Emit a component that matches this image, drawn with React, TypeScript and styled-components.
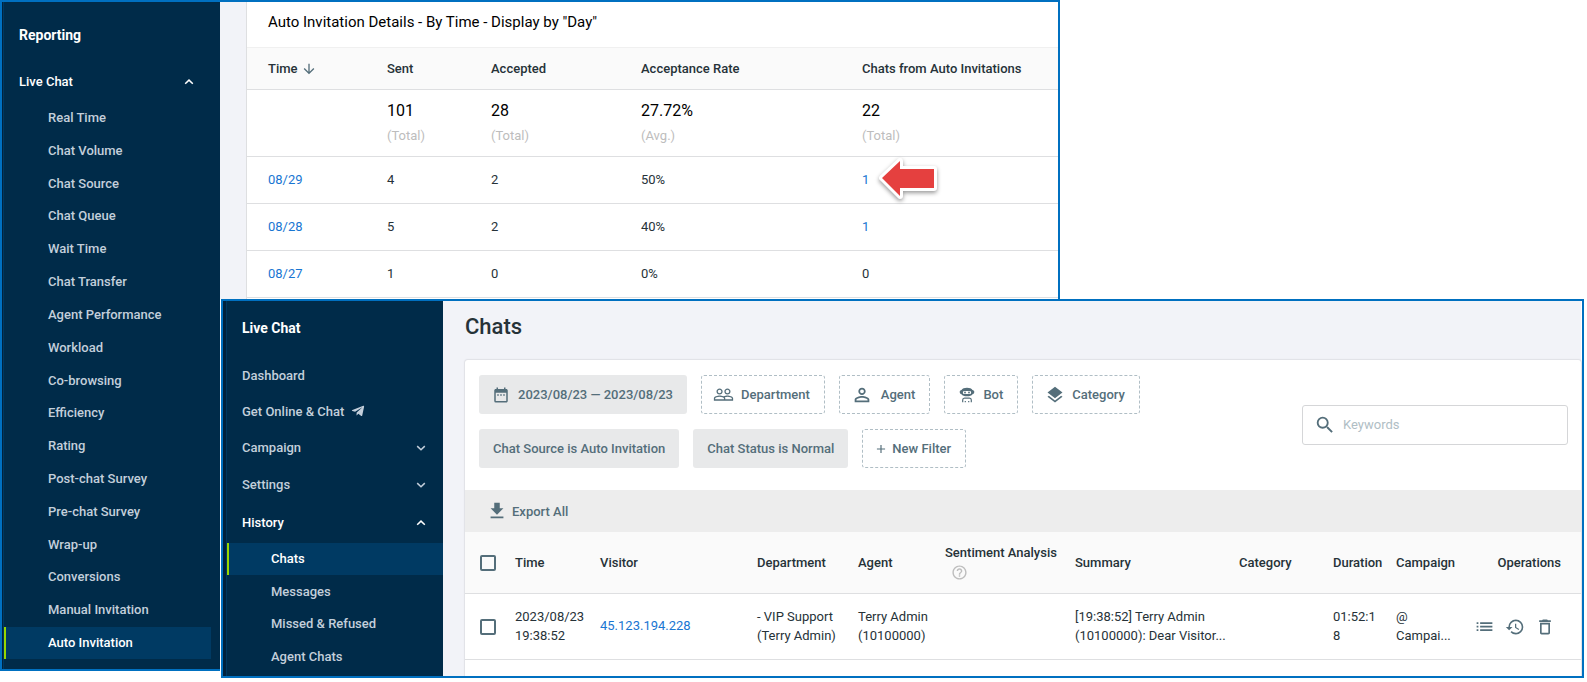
import React from "react";
import styled, { createGlobalStyle } from "styled-components";
import {
  MdAdd,
  MdArrowDownward,
  MdDateRange,
  MdDeleteOutline,
  MdGetApp,
  MdHelpOutline,
  MdHistory,
  MdLayers,
  MdList,
  MdPeopleOutline,
  MdPersonOutline,
  MdSearch,
} from "react-icons/md";
import { FaTelegramPlane } from "react-icons/fa";

const color = {
  frame: "#0070c0",
  navy: "#002b49",
  navyEdge: "#00385f",
  navyActive: "#003a63",
  lime: "#97d700",
  navText: "#c3cfdb",
  page: "#f2f3f8",
  line: "#dedfe1",
  head: "#fafafa",
  text: "#263238",
  slate: "#546e7a",
  link: "#1976d2",
  faint: "#bdbdbd",
};

const GlobalStyle = createGlobalStyle`
  *, *::before, *::after { box-sizing: border-box; }
  body {
    margin: 0;
    background: #fff;
    color: ${color.text};
    font: 400 13px/19px Roboto, "Liberation Sans", sans-serif;
  }
  h1, h2, ul { margin: 0; padding: 0; }
  ul { list-style: none; }
  a { text-decoration: none; color: inherit; }
  button, input { font: inherit; }
  svg { display: block; flex: none; }
`;

/* Two overlapping windows share one grid; the second starts in the lower right. */
const Desktop = styled.main`
  display: grid;
  grid-template-columns: 221px minmax(0, 839fr) minmax(0, 524fr) 3px;
  grid-template-rows: 299px auto 7px;
`;

const AppWindow = styled.section<{ $front?: boolean }>`
  grid-column: ${(p) => (p.$front ? "2 / 4" : "1 / 3")};
  grid-row: ${(p) => (p.$front ? "2 / 4" : "1 / 3")};
  display: grid;
  grid-template-columns: ${(p) => (p.$front ? "220px" : "218px")} minmax(0, 1fr);
  border: 2px solid ${color.frame};
  background: ${color.page};
  box-shadow: ${(p) => (p.$front ? "-1px 0 0 #fff" : "none")};
  overflow: hidden;
`;

const Sidebar = styled.nav<{ $front?: boolean }>`
  background: ${color.navy};
  border-left: ${(p) => (p.$front ? 3 : 1)}px solid #00223d;
  box-shadow: inset 1px 0 0 ${color.navyEdge};
  padding: ${(p) => (p.$front ? "17px 0 0 1px" : "23px 0 10px 1px")};
`;

const SidebarTitle = styled.h2`
  padding-left: 15px;
  font-size: 14px;
  line-height: 20px;
  font-weight: 700;
  color: #fff;
`;

const SectionButton = styled.button<{ $open?: boolean }>`
  display: flex;
  align-items: center;
  justify-content: space-between;
  width: 100%;
  height: ${(p) => (p.$open ? 39 : 37)}px;
  padding: 0 17px 0 15px;
  border: 0;
  background: none;
  font-weight: 500;
  text-align: left;
  color: ${(p) => (p.$open ? "#fff" : color.navText)};
`;

const SectionLink = styled.a`
  display: flex;
  align-items: center;
  gap: 7px;
  height: 36px;
  padding-left: 15px;
  font-weight: 500;
  color: ${color.navText};
`;

const SectionGroup = styled.div<{ $top: number; $right?: number }>`
  margin-top: ${(p) => p.$top}px;
  padding-right: ${(p) => p.$right ?? 0}px;
`;

const SubMenu = styled.ul<{ $height: number; $right?: number }>`
  display: flex;
  flex-direction: column;
  justify-content: space-between;
  height: ${(p) => p.$height}px;
  margin-top: 1px;
  padding-right: ${(p) => p.$right ?? 0}px;
`;

const SubLink = styled.a<{ $active?: boolean }>`
  display: block;
  padding-left: 42px;
  border-left: 2px solid ${(p) => (p.$active ? color.lime : "transparent")};
  background: ${(p) => (p.$active ? color.navyActive : "none")};
  font-weight: 500;
  line-height: 32px;
  color: ${(p) => (p.$active ? "#fff" : color.navText)};
`;

const ReportMain = styled.div`
  padding-left: 26px;
`;

const ReportCard = styled.div`
  height: 100%;
  border-left: 1px solid ${color.line};
  background: #fff;
`;

const ReportTitle = styled.h1`
  padding: 10px 0 15px 21px;
  font-size: 15px;
  line-height: 20px;
  font-weight: 400;
  color: #000;
`;

const ReportTable = styled.table`
  width: 100%;
  table-layout: fixed;
  border-collapse: separate;
  border-spacing: 0;

  th,
  td {
    height: 47px;
    padding: 0;
    border-bottom: 1px solid ${color.line};
    text-align: left;
  }
  td {
    padding-bottom: 2px;
  }
  th {
    height: 43px;
    border-top: 1px solid #f0f0f0;
    background: ${color.head};
    font-weight: 500;
  }
  th:first-child,
  td:first-child {
    padding-left: 21px;
  }
`;

const TotalRow = styled.tr`
  && td {
    height: 67px;
  }
`;

const SortButton = styled.button`
  display: flex;
  align-items: center;
  gap: 3px;
  padding: 0;
  border: 0;
  background: none;
  font-weight: 500;
  color: inherit;
  svg {
    color: ${color.slate};
  }
`;

const TotalValue = styled.div`
  font-size: 16px;
  line-height: 28px;
  color: #000;
`;

const TotalNote = styled.div`
  line-height: 22px;
  color: ${color.faint};
`;

const DataLink = styled.a`
  color: ${color.link};
`;

const Marked = styled.span`
  position: relative;
`;

const Pointer = styled.svg`
  position: absolute;
  left: 14px;
  top: 50%;
  transform: translateY(-50%);
  filter: drop-shadow(0 2px 2px rgba(0, 0, 0, 0.4));
`;

const ChatMain = styled.div`
  display: flex;
  flex-direction: column;
  padding: 12px 1px 0 22px;
  box-shadow: inset -1px 0 0 #fff;
`;

const PageTitle = styled.h1`
  font-size: 22px;
  line-height: 28px;
  font-weight: 500;
`;

const ChatCard = styled.div`
  flex: 1;
  margin-top: 19px;
  border-radius: 3px 3px 0 0;
  background: #fff;
  box-shadow: 0 0 1px 1px #e0e1e6;
`;

const FilterArea = styled.div`
  display: flex;
  align-items: center;
  justify-content: space-between;
  padding: 15px 13px 22px 14px;
`;

const FilterRows = styled.div`
  display: grid;
  gap: 15px;
`;

const FilterRow = styled.div`
  display: flex;
  gap: 14px;
`;

const Chip = styled.button<{ $filled?: boolean; $pad?: number; $gap?: number }>`
  display: flex;
  align-items: center;
  gap: ${(p) => p.$gap ?? 8}px;
  height: 39px;
  padding: 0 14px 0 ${(p) => p.$pad ?? 14}px;
  border: ${(p) => (p.$filled ? "0" : "1px dashed #b0bec5")};
  border-radius: 3px;
  background: ${(p) => (p.$filled ? "#e8e9ea" : "#fff")};
  font-weight: 500;
  white-space: nowrap;
  color: ${color.slate};
`;

const SearchBox = styled.label`
  display: flex;
  align-items: center;
  gap: 7px;
  width: 266px;
  height: 40px;
  margin-top: 6px;
  padding: 0 11px;
  border: 1px solid #d5d6d8;
  border-radius: 3px;
  color: ${color.slate};
`;

const SearchInput = styled.input`
  flex: 1;
  min-width: 0;
  border: 0;
  outline: 0;
  padding: 0;
  background: none;
  color: ${color.text};
  &::placeholder {
    color: #b0bec5;
    opacity: 1;
  }
`;

const ExportBar = styled.div`
  display: flex;
  height: 42px;
  padding-left: 21px;
  background: #ededed;
`;

const ExportButton = styled.button`
  display: flex;
  align-items: center;
  gap: 4px;
  padding: 0;
  border: 0;
  background: none;
  font-weight: 500;
  color: ${color.slate};
`;

const ChatTable = styled.table`
  width: 100%;
  table-layout: fixed;
  border-collapse: separate;
  border-spacing: 0;

  th,
  td {
    height: 66px;
    padding: 0;
    border-bottom: 1px solid ${color.line};
    text-align: left;
  }
  td:not(:first-child):not(:last-child) {
    padding-bottom: 2px;
  }
  th {
    height: 62px;
    background: ${color.head};
    font-weight: 500;
    white-space: nowrap;
  }
  th:first-child,
  td:first-child {
    padding-left: 15px;
  }
  th:last-child {
    padding-right: 20px;
    text-align: right;
  }
`;

const DurationCell = styled.td`
  && {
    padding-right: 20px;
    word-break: break-all;
  }
`;

const Tick = styled.input`
  appearance: none;
  display: block;
  width: 16px;
  height: 16px;
  margin: 0;
  border: 2px solid ${color.slate};
  border-radius: 2px;
`;

const HelpButton = styled.button`
  display: block;
  margin: 0;
  padding: 2px 6px;
  border: 0;
  background: none;
  color: ${color.faint};
`;

const Actions = styled.div`
  display: flex;
  align-items: center;
  gap: 10px;
`;

const IconButton = styled.button`
  padding: 0;
  border: 0;
  background: none;
  color: ${color.slate};
`;

const Chevron = ({ up }: { up?: boolean }) => (
  <svg width="10" height="10" viewBox="0 0 10 10" aria-hidden="true">
    <path
      d={up ? "M1.2 6.7 5 3.1l3.8 3.6" : "M1.2 3.1 5 6.7l3.8-3.6"}
      fill="none"
      stroke="currentColor"
      strokeWidth="1.5"
    />
  </svg>
);

const BotIcon = () => (
  <svg width="16" height="16" viewBox="0 0 16 16" aria-hidden="true">
    <path
      fill="currentColor"
      fillRule="evenodd"
      d="M8 .8c2.700 0 4.600.8 5.500 2.200 1.100.1 1.800 1 1.800 2.100s-.7 2-1.800 2.100C12.600 8.600 10.700 9.300 8 9.300S3.400 8.600 2.500 7.200C1.400 7.100.7 6.200.7 5.100s.7-2 1.800-2.100C3.400 1.600 5.300.8 8 .8zM5.400 3.900c-1 0-1.500.6-1.500 1.500s.5 1.700 1.500 1.700h5.200c1 0 1.500-.8 1.500-1.700s-.5-1.500-1.500-1.500z"
    />
    <circle cx="6" cy="5.500" r=".9" fill="currentColor" />
    <circle cx="10" cy="5.500" r=".9" fill="currentColor" />
    <path
      d="M3.700 15.300v-2.300c0-1.100.7-1.900 1.800-1.900h5c1.100 0 1.800.8 1.800 1.900v2.300M6.300 15.300v-1.300M9.700 15.300v-1.300"
      fill="none"
      stroke="currentColor"
      strokeWidth="1.200"
    />
  </svg>
);

const reportLinks = [
  "Real Time",
  "Chat Volume",
  "Chat Source",
  "Chat Queue",
  "Wait Time",
  "Chat Transfer",
  "Agent Performance",
  "Workload",
  "Co-browsing",
  "Efficiency",
  "Rating",
  "Post-chat Survey",
  "Pre-chat Survey",
  "Wrap-up",
  "Conversions",
  "Manual Invitation",
  "Auto Invitation",
];

const historyLinks = ["Chats", "Messages", "Missed & Refused", "Agent Chats"];

const totals = [
  ["101", "(Total)"],
  ["28", "(Total)"],
  ["27.72%", "(Avg.)"],
  ["22", "(Total)"],
];

const days = [
  { day: "08/29", sent: 4, accepted: 2, rate: "50%", chats: 1, marked: true },
  { day: "08/28", sent: 5, accepted: 2, rate: "40%", chats: 1 },
  { day: "08/27", sent: 1, accepted: 0, rate: "0%", chats: 0 },
];

const RedPointer = () => (
  <Pointer width="64" height="50" viewBox="0 0 64 50" aria-hidden="true">
    <path
      d="M6 24 24 7v8h34v19H24v8z"
      fill="#e5403f"
      stroke="#fff"
      strokeWidth="6"
      strokeLinejoin="round"
      paintOrder="stroke"
    />
  </Pointer>
);

const SubMenuItems = ({ items, active }: { items: string[]; active: string }) => (
  <>
    {items.map((name) => (
      <li key={name}>
        <SubLink href="#" $active={name === active}>
          {name}
        </SubLink>
      </li>
    ))}
  </>
);

const ReportWindow = () => (
  <AppWindow>
    <Sidebar>
      <SidebarTitle>Reporting</SidebarTitle>
      <SectionGroup $top={17} $right={9}>
        <SectionButton $open>
          Live Chat
          <Chevron up />
        </SectionButton>
      </SectionGroup>
      <SubMenu $height={557} $right={9}>
        <SubMenuItems items={reportLinks} active="Auto Invitation" />
      </SubMenu>
    </Sidebar>
    <ReportMain>
      <ReportCard>
        <ReportTitle>Auto Invitation Details - By Time - Display by "Day"</ReportTitle>
        <ReportTable>
          <colgroup>
            <col style={{ width: 140 }} />
            <col style={{ width: 104 }} />
            <col style={{ width: 150 }} />
            <col />
            <col style={{ width: 196 }} />
          </colgroup>
          <thead>
            <tr>
              <th>
                <SortButton>
                  Time
                  <MdArrowDownward size={16} />
                </SortButton>
              </th>
              <th>Sent</th>
              <th>Accepted</th>
              <th>Acceptance Rate</th>
              <th>Chats from Auto Invitations</th>
            </tr>
          </thead>
          <tbody>
            <TotalRow>
              <td />
              {totals.map(([value, note], i) => (
                <td key={i}>
                  <TotalValue>{value}</TotalValue>
                  <TotalNote>{note}</TotalNote>
                </td>
              ))}
            </TotalRow>
            {days.map((d) => (
              <tr key={d.day}>
                <td>
                  <DataLink href="#">{d.day}</DataLink>
                </td>
                <td>{d.sent}</td>
                <td>{d.accepted}</td>
                <td>{d.rate}</td>
                <td>
                  <Marked>
                    {d.chats > 0 ? <DataLink href="#">{d.chats}</DataLink> : d.chats}
                    {d.marked && <RedPointer />}
                  </Marked>
                </td>
              </tr>
            ))}
          </tbody>
        </ReportTable>
      </ReportCard>
    </ReportMain>
  </AppWindow>
);

const ChatWindow = () => (
  <AppWindow $front>
    <Sidebar $front>
      <SidebarTitle>Live Chat</SidebarTitle>
      <SectionGroup $top={19}>
        <SectionLink href="#">Dashboard</SectionLink>
        <SectionLink href="#">
          Get Online &amp; Chat
          <FaTelegramPlane size={14} />
        </SectionLink>
        <SectionButton>
          Campaign
          <Chevron />
        </SectionButton>
        <SectionButton>
          Settings
          <Chevron />
        </SectionButton>
        <SectionButton $open>
          History
          <Chevron up />
        </SectionButton>
      </SectionGroup>
      <SubMenu $height={130}>
        <SubMenuItems items={historyLinks} active="Chats" />
      </SubMenu>
    </Sidebar>
    <ChatMain>
      <PageTitle>Chats</PageTitle>
      <ChatCard>
        <FilterArea>
          <FilterRows>
            <FilterRow>
              <Chip $filled $pad={13}>
                <MdDateRange size={18} />
                2023/08/23 — 2023/08/23
              </Chip>
              <Chip $pad={11} $gap={7}>
                <MdPeopleOutline size={21} />
                Department
              </Chip>
              <Chip $pad={11}>
                <MdPersonOutline size={22} />
                Agent
              </Chip>
              <Chip>
                <BotIcon />
                Bot
              </Chip>
              <Chip $pad={12} $gap={7}>
                <MdLayers size={20} />
                Category
              </Chip>
            </FilterRow>
            <FilterRow>
              <Chip $filled>Chat Source is Auto Invitation</Chip>
              <Chip $filled>Chat Status is Normal</Chip>
              <Chip $pad={11} $gap={4}>
                <MdAdd size={14} />
                New Filter
              </Chip>
            </FilterRow>
          </FilterRows>
          <SearchBox>
            <MdSearch size={22} />
            <SearchInput type="text" placeholder="Keywords" aria-label="Keywords" />
          </SearchBox>
        </FilterArea>
        <ExportBar>
          <ExportButton>
            <MdGetApp size={22} />
            Export All
          </ExportButton>
        </ExportBar>
        <ChatTable>
          <colgroup>
            <col style={{ width: 50 }} />
            <col style={{ width: 85 }} />
            <col />
            <col style={{ width: 101 }} />
            <col style={{ width: 87 }} />
            <col style={{ width: 130 }} />
            <col style={{ width: 164 }} />
            <col style={{ width: 94 }} />
            <col style={{ width: 63 }} />
            <col style={{ width: 78 }} />
            <col style={{ width: 107 }} />
          </colgroup>
          <thead>
            <tr>
              <th>
                <Tick type="checkbox" aria-label="Select all chats" />
              </th>
              <th>Time</th>
              <th>Visitor</th>
              <th>Department</th>
              <th>Agent</th>
              <th>
                Sentiment Analysis
                <HelpButton aria-label="About sentiment analysis">
                  <MdHelpOutline size={17} />
                </HelpButton>
              </th>
              <th>Summary</th>
              <th>Category</th>
              <th>Duration</th>
              <th>Campaign</th>
              <th>Operations</th>
            </tr>
          </thead>
          <tbody>
            <tr>
              <td>
                <Tick type="checkbox" aria-label="Select chat with 45.123.194.228" />
              </td>
              <td>
                2023/08/23
                <br />
                19:38:52
              </td>
              <td>
                <DataLink href="#">45.123.194.228</DataLink>
              </td>
              <td>
                - VIP Support
                <br />
                (Terry Admin)
              </td>
              <td>
                Terry Admin
                <br />
                (10100000)
              </td>
              <td />
              <td>
                [19:38:52] Terry Admin
                <br />
                (10100000): Dear Visitor...
              </td>
              <td />
              <DurationCell>01:52:18</DurationCell>
              <td>
                @
                <br />
                Campai...
              </td>
              <td>
                <Actions>
                  <IconButton aria-label="View details">
                    <MdList size={21} />
                  </IconButton>
                  <IconButton aria-label="View history">
                    <MdHistory size={20} />
                  </IconButton>
                  <IconButton aria-label="Delete">
                    <MdDeleteOutline size={20} />
                  </IconButton>
                </Actions>
              </td>
            </tr>
          </tbody>
        </ChatTable>
      </ChatCard>
    </ChatMain>
  </AppWindow>
);

export default function App() {
  return (
    <>
      <GlobalStyle />
      <Desktop>
        <ReportWindow />
        <ChatWindow />
      </Desktop>
    </>
  );
}
